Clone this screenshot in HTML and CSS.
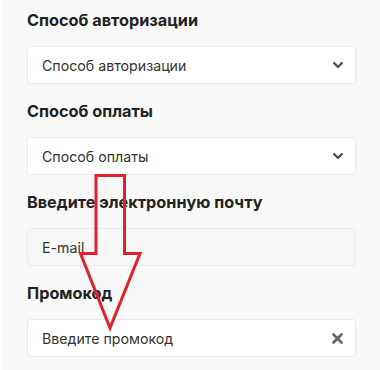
FILE: index.html
```html
<!DOCTYPE html>
<html lang="ru">
<head>
<meta charset="utf-8">
<link rel="stylesheet" href="styles.css">
</head>
<body>
<div class="page">
  <div class="field">
    <div class="label">Способ авторизации</div>
    <div class="input">
      <span class="value">Способ авторизации</span>
      <svg class="icon chevron" width="10" height="7" viewBox="0 0 10 7"><polyline points="1.2,1.2 5,5 8.8,1.2" fill="none" stroke="#555" stroke-width="2.4" stroke-linecap="round" stroke-linejoin="round"/></svg>
    </div>
  </div>
  <div class="field">
    <div class="label">Способ оплаты</div>
    <div class="input">
      <span class="value">Способ оплаты</span>
      <svg class="icon chevron" width="10" height="7" viewBox="0 0 10 7"><polyline points="1.2,1.2 5,5 8.8,1.2" fill="none" stroke="#555" stroke-width="2.4" stroke-linecap="round" stroke-linejoin="round"/></svg>
    </div>
  </div>
  <div class="field">
    <div class="label">Введите электронную почту</div>
    <div class="input input-muted">
      <span class="value">E-mail</span>
    </div>
  </div>
  <div class="field">
    <div class="label">Промокод</div>
    <div class="input">
      <span class="value">Введите промокод</span>
      <svg class="icon close" width="11" height="11" viewBox="0 0 11 11"><path d="M1.5 1.5 L9.5 9.5 M9.5 1.5 L1.5 9.5" fill="none" stroke="#666" stroke-width="2.6" stroke-linecap="round"/></svg>
    </div>
  </div>
  <svg class="arrow" width="380" height="370" viewBox="0 0 380 370">
    <polygon points="94,175.5 122.5,175.5 122.5,253.5 138,253.5 108,328 78.5,253.5 94,253.5" fill="none" stroke="#e3202a" stroke-width="3" stroke-linejoin="miter"/>
  </svg>
</div>
</body>
</html>
```

FILE: styles.css
```css
html, body {
  margin: 0;
  padding: 0;
}
body {
  background: #f8f8f8;
  font-family: Inter, "Noto Sans", "Liberation Sans", sans-serif;
  width: 380px;
  height: 370px;
  overflow: hidden;
}
.page {
  position: relative;
  box-sizing: border-box;
  width: 380px;
  height: 370px;
  padding: 9px 24px 0 25px;
  border-left: 2px solid #fcfcfc;
}
.field {
  margin-bottom: 16px;
}
.label {
  font-size: 16.25px;
  line-height: 22px;
  font-weight: 700;
  color: #222;
  margin-bottom: 15px;
}
.input {
  box-sizing: border-box;
  height: 38px;
  background: #fff;
  border: 1px solid #ebebeb;
  border-radius: 3px;
  display: flex;
  align-items: center;
  justify-content: space-between;
  padding: 0 12px 0 14px;
}
.input-muted {
  background: #f7f7f7;
}
.value {
  font-size: 14.2px;
  color: #333;
}
.icon {
  display: block;
}
.arrow {
  position: absolute;
  left: 0;
  top: 0;
  pointer-events: none;
}
```
